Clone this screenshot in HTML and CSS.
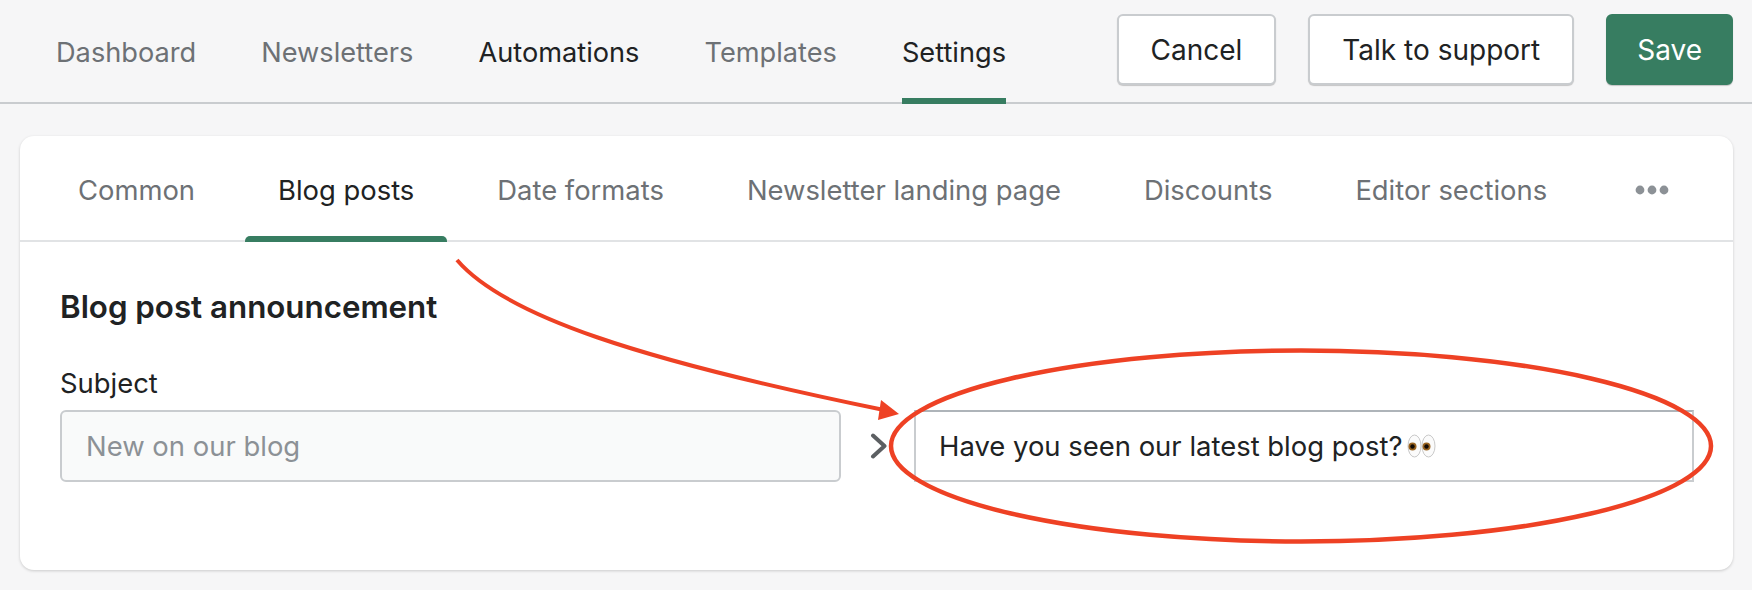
FILE: index.html
```html
<!DOCTYPE html>
<html lang="en">
<head>
  <meta charset="UTF-8">
  <meta name="viewport" content="width=device-width, initial-scale=1.0">
  <title>Blog post settings</title>
  <link rel="stylesheet" href="styles.css">
</head>
<body>
  <!-- Top bar -->
  <header class="topbar">
    <nav class="main-nav">
      <a class="nav-item">Dashboard</a>
      <a class="nav-item">Newsletters</a>
      <a class="nav-item dark">Automations</a>
      <a class="nav-item">Templates</a>
      <a class="nav-item dark active">Settings</a>
    </nav>
    <div class="actions">
      <button class="btn">Cancel</button>
      <button class="btn">Talk to support</button>
      <button class="btn primary">Save</button>
    </div>
  </header>

  <!-- Settings card -->
  <main class="card">
    <div class="tabs">
      <a class="tab">Common</a>
      <a class="tab active">Blog posts</a>
      <a class="tab">Date formats</a>
      <a class="tab">Newsletter landing page</a>
      <a class="tab">Discounts</a>
      <a class="tab">Editor sections</a>
      <a class="tab more">
        <svg width="34" height="10" viewBox="0 0 34 10"><circle cx="5" cy="5" r="4.400"/><circle cx="17" cy="5" r="4.400"/><circle cx="29" cy="5" r="4.400"/></svg>
      </a>
    </div>
    <section class="panel">
      <h2>Blog post announcement</h2>
      <label class="label">Subject</label>
      <div class="field-row">
        <div class="field source">New on our blog</div>
        <svg class="chevron" width="18" height="26" viewBox="0 0 18 26"><path d="M3 2.500 14.500 13 3 23.500" fill="none" stroke="#5c5f62" stroke-width="4" stroke-linecap="round" stroke-linejoin="round"/></svg>
        <div class="field target">
          Have you seen our latest blog post?
          <svg class="eyes" width="30" height="26" viewBox="0 0 30 26">
            <ellipse cx="7.500" cy="13" rx="6.500" ry="11" fill="#fbfbfb" stroke="#c9c9c9"/>
            <ellipse cx="21.500" cy="13" rx="6.500" ry="11" fill="#fbfbfb" stroke="#c9c9c9"/>
            <circle cx="5.500" cy="13.500" r="4" fill="#9a6420"/>
            <circle cx="19.500" cy="13.500" r="4" fill="#9a6420"/>
            <circle cx="5.500" cy="13.500" r="2.200" fill="#120a04"/>
            <circle cx="19.500" cy="13.500" r="2.200" fill="#120a04"/>
          </svg>
        </div>
      </div>
    </section>
  </main>

  <!-- Red annotation drawn over the page -->
  <svg class="annotation" width="1752" height="590" viewBox="0 0 1752 590">
    <path d="M457 260C505 316 640 360 884 410" fill="none" stroke="#ee4124" stroke-width="4"/>
    <path d="M899 414 881 400 878 420Z" fill="#ee4124"/>
    <ellipse cx="1301" cy="446" rx="410" ry="95.500" fill="none" stroke="#ee4124" stroke-width="4.500"/>
  </svg>
</body>
</html>
```

FILE: styles.css
```css
body {
  margin: 0;
  width: 1752px;
  height: 590px;
  overflow: hidden;
  position: relative;
  background-color: #f6f6f7;
  font-family: Inter, "Liberation Sans", sans-serif;
  font-size: 27.4px;
  color: #202223;
}

.topbar {
  display: flex;
  justify-content: space-between;
  height: 102px;
  padding: 0 19px 0 56px;
  border-bottom: 2px solid #c9cccf;
}

.main-nav {
  display: flex;
  gap: 65px;
}

.nav-item {
  display: flex;
  align-items: center;
  height: 92px;
  padding-top: 6px;
  border-bottom: 6px solid transparent;
  font-size: 27.2px;
  color: #6d7175;
}

.nav-item.dark {
  color: #202223;
}

.nav-item.active {
  border-bottom-color: #377d61;
}

.actions {
  display: flex;
  gap: 32px;
  padding-top: 14px;
}

.btn {
  height: 71px;
  padding: 0 32px;
  border: 2px solid #c9cccf;
  border-radius: 6px;
  background-color: #fff;
  box-shadow: 0 1px 1px rgba(0, 0, 0, 0.2);
  font: inherit;
  font-size: 28px;
  color: inherit;
}

.btn.primary {
  padding: 0 29px;
  border-color: #377d61;
  background-color: #377d61;
  color: #fff;
}

.card {
  margin: 32px 19px 0 20px;
  height: 434px;
  background-color: #fff;
  border-radius: 14px;
  box-shadow: 0 1px 3px rgba(0, 0, 0, 0.18);
}

.tabs {
  display: flex;
  gap: 17px;
  height: 104px;
  padding-left: 25px;
  border-bottom: 2px solid #e1e3e5;
}

.tab {
  position: relative;
  display: flex;
  align-items: center;
  padding: 4px 33px 0;
  color: #6d7175;
}

.tab.active {
  color: #202223;
}

.tab.active::after {
  content: "";
  position: absolute;
  left: 0;
  right: 0;
  bottom: -2px;
  height: 6px;
  border-radius: 5px 5px 0 0;
  background-color: #377d61;
}

.tab.more {
  margin-left: 5px;
}

.tab.more svg {
  fill: #8c9196;
}

.panel {
  padding: 47px 39px 0 40px;
}

.panel h2 {
  margin: 0;
  font-size: 31.3px;
  line-height: 36px;
  font-weight: 600;
}

.label {
  display: block;
  margin-top: 40px;
  line-height: 36px;
}

.field-row {
  display: flex;
  align-items: center;
  margin-top: 9px;
}

.field {
  display: flex;
  align-items: center;
  gap: 4px;
  height: 72px;
  box-sizing: border-box;
  padding: 0 24px;
  border: 2px solid #c9cccf;
  font-size: 27.45px;
}

.field.source {
  width: 781px;
  border-radius: 6px;
  background-color: #f9fafa;
  color: #8c9196;
}

.chevron {
  margin: 0 26px 0 29px;
}

.field.target {
  flex: 1;
  padding-left: 23px;
  border-top-color: #aeb4b9;
}

.annotation {
  position: absolute;
  top: 0;
  left: 0;
}
```
